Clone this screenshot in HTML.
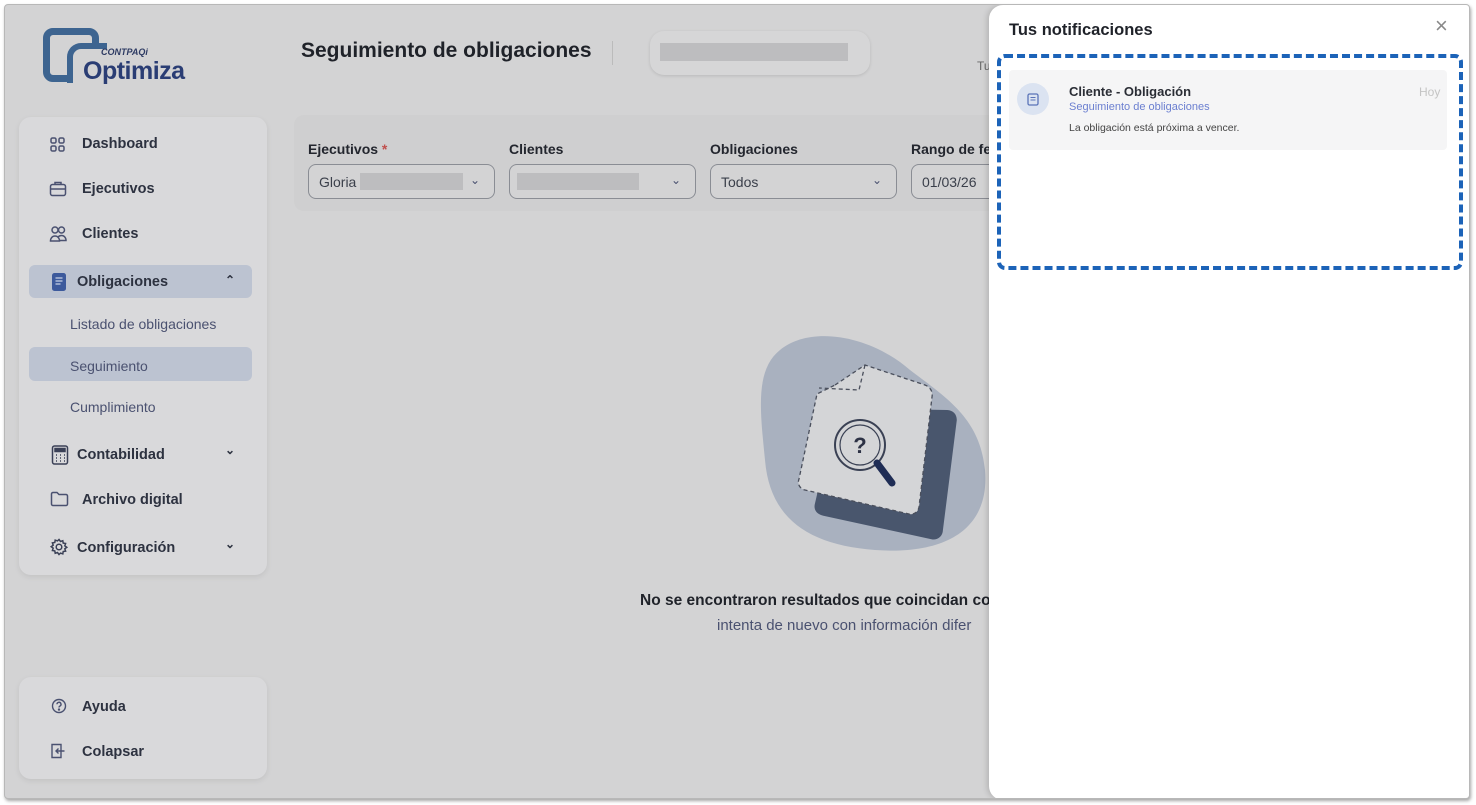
<!DOCTYPE html>
<html><head><meta charset="utf-8"><style>
*{box-sizing:border-box;margin:0;padding:0}
body{width:1476px;height:805px;background:#fff;font-family:"Liberation Sans",sans-serif;position:relative;overflow:hidden}
.frame{position:absolute;left:4px;top:4px;width:1466px;height:795px;background:#d3d3d4;border:1px solid #b8b8b8;border-radius:4px;box-shadow:1px 2px 3px rgba(0,0,0,.35);overflow:hidden}
.abs{position:absolute}
.card{background:#d9d9db;border-radius:12px;box-shadow:0 2px 6px rgba(0,0,0,.08)}
.nav{position:absolute;font-size:14.5px;font-weight:bold;color:#2d3240}
.sub{position:absolute;font-size:14px;color:#4a5170}
.lbl{position:absolute;font-size:14px;font-weight:bold;color:#23262e}
.sel{position:absolute;height:35px;border:1px solid #8a8d94;border-radius:8px;background:#d3d3d4;font-size:14px;color:#3a3f4a;padding:9px 10px}
.sel .ch{position:absolute;right:14px;top:8px;font-size:12px;color:#4a5170}
.blur{position:absolute;background:#bdbdbf}
</style></head><body>
<div class="frame">
 <!-- logo -->
 <div class="abs" style="left:38px;top:23px;width:56px;height:54px;border:7px solid #3d6490;border-radius:10px"></div>
 <div class="abs" style="left:62px;top:38px;width:40px;height:40px;background:#d3d3d4;border:6px solid #3d6490;border-radius:14px 0 0 0;border-right:none;border-bottom:none"></div>
 <div class="abs" style="left:96px;top:42px;font-size:9px;font-style:italic;font-weight:bold;color:#2e3b63">CONTPAQi</div>
 <div class="abs" style="left:78px;top:52px;font-size:25px;font-weight:bold;color:#2a3d74;letter-spacing:-.5px">Optimiza</div>

 <div class="abs" style="left:296px;top:34px;font-size:21px;font-weight:bold;color:#1f2229">Seguimiento de obligaciones</div>
 <div class="abs" style="left:607px;top:36px;width:1px;height:24px;background:#bbb"></div>
 <div class="abs" style="left:645px;top:26px;width:220px;height:44px;border-radius:14px;background:#d6d6d7;box-shadow:0 1px 3px rgba(0,0,0,.12)"></div>
 <div class="blur" style="left:655px;top:38px;width:188px;height:18px"></div>
 <div class="abs" style="left:972px;top:54px;font-size:12px;color:#666">Tu</div>

 <!-- sidebar -->
 <div class="abs card" style="left:14px;top:112px;width:248px;height:458px"></div>
 <div class="abs" style="left:24px;top:260px;width:223px;height:33px;background:#bcc3d1;border-radius:6px"></div>
 <div class="abs" style="left:24px;top:342px;width:223px;height:34px;background:#bcc3d1;border-radius:6px"></div>
 <svg class="abs" style="left:44px;top:131px" width="18" height="18" fill="none" stroke="#4a5170" stroke-width="1.5"><rect x="2" y="2" width="5" height="5" rx="1.5"/><rect x="10" y="2" width="5" height="5" rx="1.5"/><rect x="2" y="10" width="5" height="5" rx="1.5"/><rect x="10" y="10" width="5" height="5" rx="1.5"/></svg>
 <div class="nav" style="left:77px;top:131px">Dashboard</div>
 <svg class="abs" style="left:44px;top:175px" width="18" height="18" fill="none" stroke="#4a5170" stroke-width="1.5"><rect x="1.5" y="4.5" width="15" height="11" rx="2"/><path d="M6 4.5V2.5h6v2M1.5 9h15"/></svg>
 <div class="nav" style="left:77px;top:176px">Ejecutivos</div>
 <svg class="abs" style="left:44px;top:220px" width="18" height="18" fill="none" stroke="#4a5170" stroke-width="1.5"><circle cx="6" cy="5" r="3"/><circle cx="12.5" cy="5" r="3"/><path d="M1.5 16c0-3 2-5 4.5-5s4.5 2 4.5 5zM9 12c1-1 2-1.5 3.5-1.5 2.5 0 4.5 2 4.5 5H11"/></svg>
 <div class="nav" style="left:77px;top:221px">Clientes</div>
 <svg class="abs" style="left:46px;top:267px" width="16" height="20"><rect x="1" y="1" width="14" height="18" rx="2.5" fill="#3d5a9c"/><path d="M4.5 6h7M4.5 9h7M4.5 12h5" stroke="#c9d2e6" stroke-width="1.2"/></svg>
 <div class="nav" style="left:72px;top:269px">Obligaciones</div>
 <div class="nav" style="left:220px;top:268px;font-size:12px">&#8963;</div>
 <div class="sub" style="left:65px;top:311px">Listado de obligaciones</div>
 <div class="sub" style="left:65px;top:353px">Seguimiento</div>
 <div class="sub" style="left:65px;top:394px">Cumplimiento</div>
 <svg class="abs" style="left:46px;top:440px" width="18" height="20" fill="none" stroke="#3a4056" stroke-width="1.5"><rect x="1.5" y="1" width="15" height="18" rx="2"/><rect x="4" y="3.5" width="10" height="3" fill="#3a4056"/><path d="M5 10h1M9 10h1M13 10h1M5 13h1M9 13h1M13 13h1M5 16h1M9 16h1M13 16h1"/></svg>
 <div class="nav" style="left:72px;top:442px">Contabilidad</div>
 <div class="nav" style="left:220px;top:438px;font-size:12px">&#8964;</div>
 <svg class="abs" style="left:45px;top:486px" width="19" height="16" fill="none" stroke="#4a5170" stroke-width="1.5"><path d="M1.5 3a1.5 1.5 0 011.5-1.5h4l2 2h7a1.5 1.5 0 011.5 1.5v8a1.5 1.5 0 01-1.5 1.5H3A1.5 1.5 0 011.5 13z"/></svg>
 <div class="nav" style="left:77px;top:487px">Archivo digital</div>
 <svg class="abs" style="left:45px;top:533px" width="18" height="18" fill="none" stroke="#3a4056" stroke-width="1.5"><circle cx="9" cy="9" r="2.8"/><path d="M9 1.5l1.5 2 2.3-.8.4 2.4 2.4.4-.8 2.3 2 1.5-2 1.5.8 2.3-2.4.4-.4 2.4-2.3-.8L9 16.5l-1.5-2-2.3.8-.4-2.4-2.4-.4.8-2.3-2-1.5 2-1.5-.8-2.3 2.4-.4.4-2.4 2.3.8z"/></svg>
 <div class="nav" style="left:72px;top:535px">Configuración</div>
 <div class="nav" style="left:220px;top:532px;font-size:12px">&#8964;</div>

 <div class="abs card" style="left:14px;top:672px;width:248px;height:102px"></div>
 <svg class="abs" style="left:46px;top:693px" width="16" height="16" fill="none" stroke="#4a5170" stroke-width="1.4"><circle cx="8" cy="8" r="6.5"/><path d="M6 6.3a2 2 0 113 1.7c-.8.4-1 .8-1 1.5"/><circle cx="8" cy="11.6" r=".5" fill="#4a5170"/></svg>
 <div class="nav" style="left:77px;top:694px">Ayuda</div>
 <svg class="abs" style="left:45px;top:738px" width="18" height="16" fill="none" stroke="#4a5170" stroke-width="1.4"><path d="M2 1.5h9v13H2zM14.5 8H6M8.5 5.5L6 8l2.5 2.5"/></svg>
 <div class="nav" style="left:77px;top:739px">Colapsar</div>

 <!-- filter bar -->
 <div class="abs" style="left:289px;top:110px;width:720px;height:96px;background:#cfcfd0;border-radius:10px"></div>
 <div class="lbl" style="left:303px;top:136px">Ejecutivos <span style="color:#c0504d">*</span></div>
 <div class="lbl" style="left:504px;top:136px">Clientes</div>
 <div class="lbl" style="left:705px;top:136px">Obligaciones</div>
 <div class="lbl" style="left:906px;top:136px">Rango de fe</div>
 <div class="sel" style="left:303px;top:159px;width:187px">Gloria<span class="ch">&#8964;</span></div>
 <div class="blur" style="left:355px;top:168px;width:103px;height:17px"></div>
 <div class="sel" style="left:504px;top:159px;width:187px"><span class="ch">&#8964;</span></div>
 <div class="blur" style="left:512px;top:168px;width:122px;height:17px"></div>
 <div class="sel" style="left:705px;top:159px;width:187px">Todos<span class="ch">&#8964;</span></div>
 <div class="sel" style="left:906px;top:159px;width:120px">01/03/26</div>

 <!-- illustration -->
 <svg class="abs" style="left:755px;top:325px" width="230" height="225">
  <path d="M20 20C50-5 110 5 150 40c40 30 70 50 75 100 5 60-40 85-110 80C50 215 10 190 5 130 0 80-5 40 20 20z" fill="#a9b1bf"/>
  <path d="M75 80l110 -2 c6 0 10 4 10 10l-10 110c0 6-4 10-10 10l-110-20c-6-1-10-5-9-11z" fill="#49566d" transform="rotate(2 130 140)"/>
  <path d="M75 55l30-20 60 20c5 2 8 6 7 12l-13 110c-1 5-5 8-10 7L45 160c-5-1-8-6-6-11l18-85z" fill="#d4d5d7" stroke="#4a4f5c" stroke-width="1.3" stroke-dasharray="4 3"/>
  <path d="M105 35l-6 25-40 -2" fill="none" stroke="#4a4f5c" stroke-width="1.3" stroke-dasharray="4 3"/>
  <circle cx="100" cy="115" r="25" fill="#d4d5d7" stroke="#3a4154" stroke-width="2"/>
  <circle cx="100" cy="115" r="20" fill="none" stroke="#3a4154" stroke-width="1.2"/>
  <path d="M117 133l15 20" stroke="#1f2d55" stroke-width="7" stroke-linecap="round"/>
  <text x="100" y="123" font-size="22" font-weight="bold" text-anchor="middle" fill="#2d3245" font-family="Liberation Sans">?</text>
 </svg>
 <div class="abs" style="left:635px;top:587px;font-size:15.5px;font-weight:bold;color:#1f2229;white-space:nowrap">No se encontraron resultados que coincidan co</div>
 <div class="abs" style="left:712px;top:612px;font-size:15px;color:#4a5170;white-space:nowrap">intenta de nuevo con información difer</div>

 <!-- notifications panel -->
 <div class="abs" style="left:984px;top:0;width:482px;height:795px;background:#fff;border-radius:14px 0 0 14px;box-shadow:-2px 0 6px rgba(0,0,0,.15)">
  <div class="abs" style="left:20px;top:16px;font-size:16.5px;font-weight:bold;color:#1f2229">Tus notificaciones</div>
  <div class="abs" style="left:446px;top:8px;font-size:22px;color:#888">×</div>
  <div class="abs" style="left:20px;top:65px;width:438px;height:80px;background:#f5f5f6;border-radius:4px"></div>
  <div class="abs" style="left:28px;top:78px;width:32px;height:32px;border-radius:50%;background:#dbe3f1"></div>
  <svg class="abs" style="left:38px;top:88px" width="12" height="13"><rect x="1" y="1" width="10" height="11" rx="1.5" fill="none" stroke="#5a73b8" stroke-width="1.3"/><path d="M3.5 4.5h5M3.5 7h5" stroke="#5a73b8"/></svg>
  <div class="abs" style="left:80px;top:79px;font-size:13px;font-weight:bold;color:#2a2d35">Cliente - Obligación</div>
  <div class="abs" style="left:80px;top:96px;font-size:11px;color:#6b7fd0">Seguimiento de obligaciones</div>
  <div class="abs" style="left:80px;top:117px;font-size:10.5px;color:#444">La obligación está próxima a vencer.</div>
  <div class="abs" style="left:430px;top:80px;font-size:12px;color:#c4c4c4">Hoy</div>
  <div class="abs" style="left:8px;top:49px;width:466px;height:216px;border:4px dashed #1c63b8;border-radius:8px"></div>
 </div>
</div>
</body></html>
